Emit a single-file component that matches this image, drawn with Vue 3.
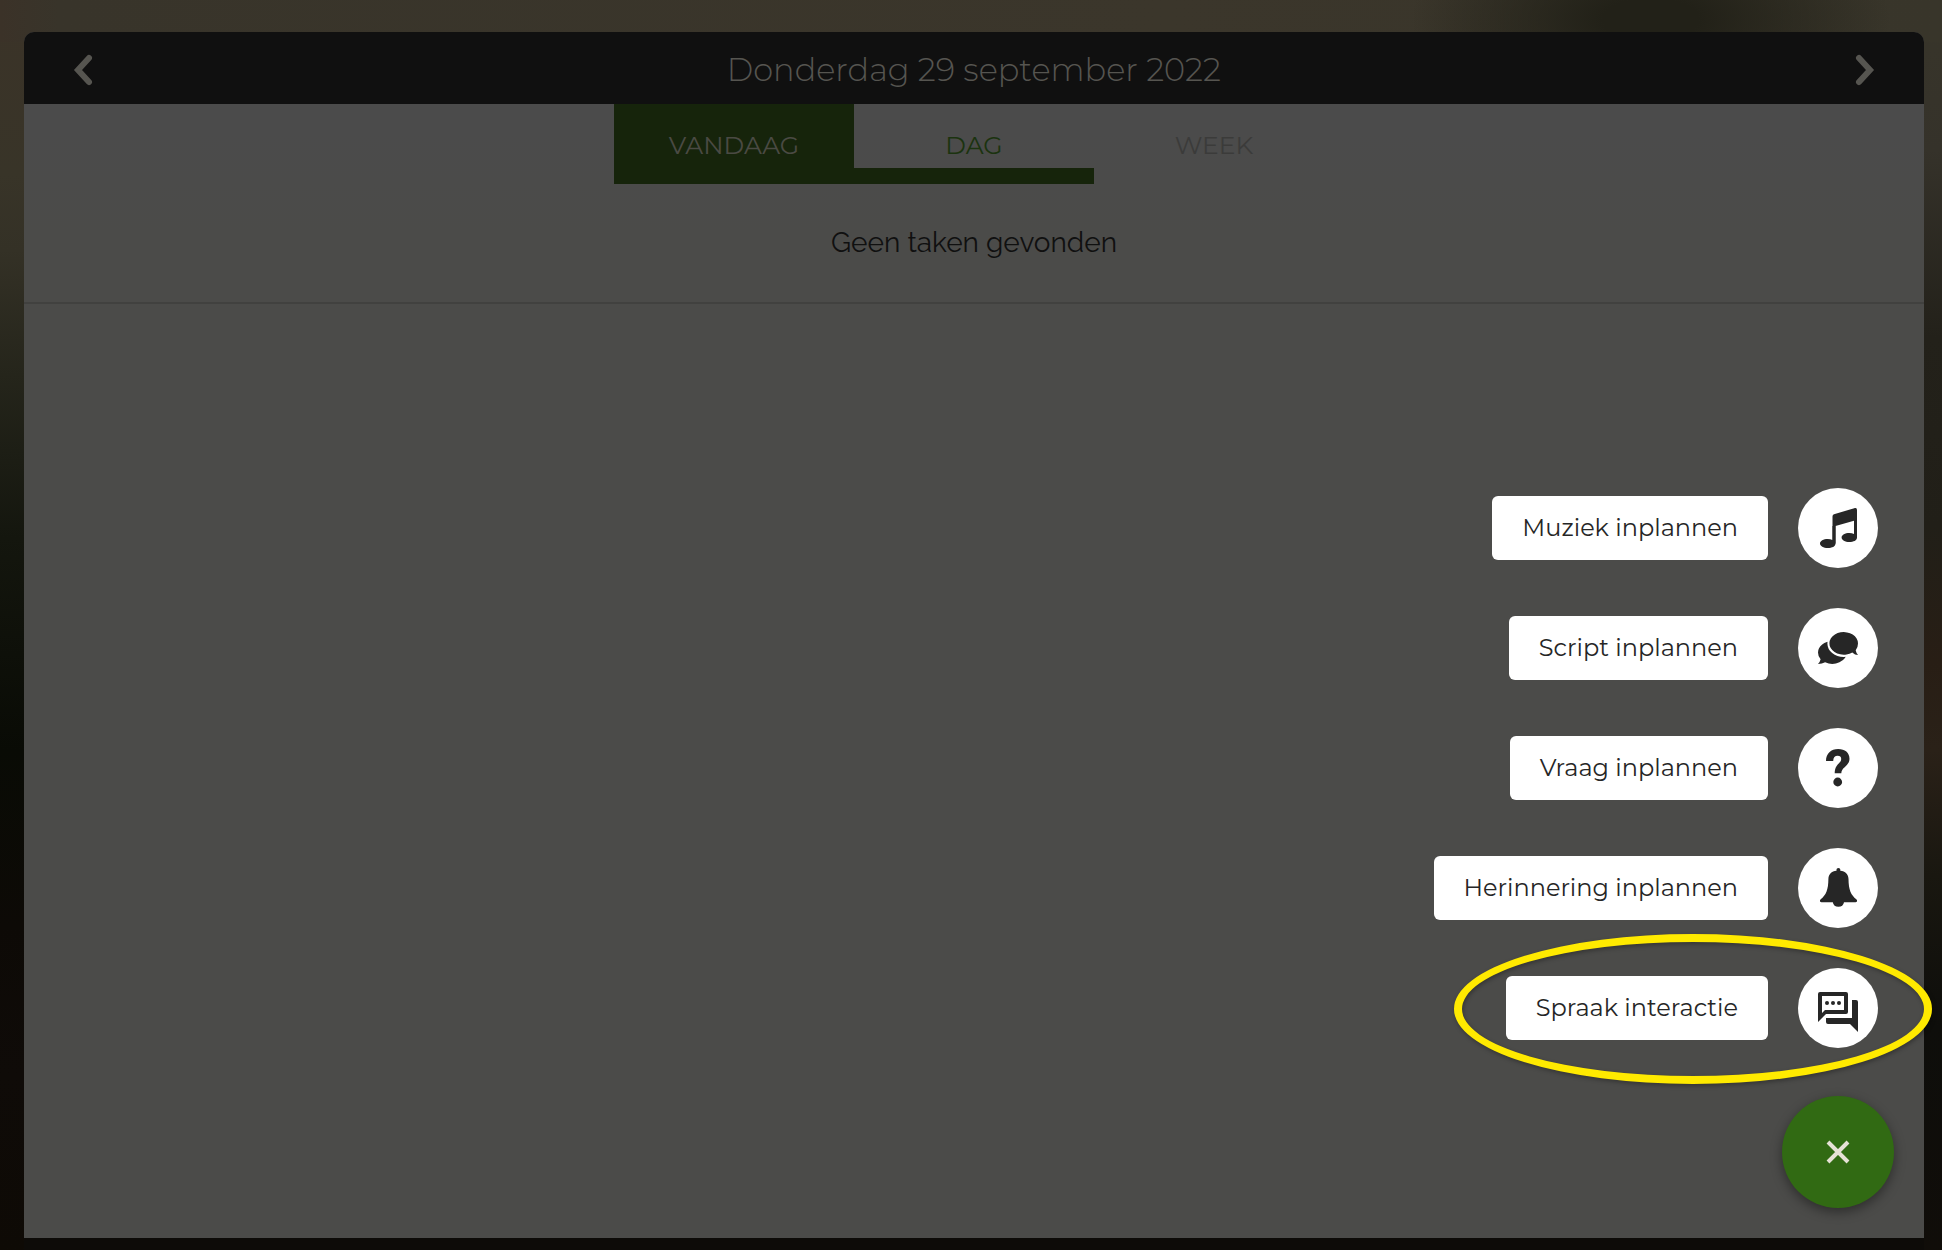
<script setup>
import { ref } from 'vue'

const view = ref('dag')
const actions = [
  { id: 'music', label: 'Muziek inplannen' },
  { id: 'script', label: 'Script inplannen' },
  { id: 'question', label: 'Vraag inplannen' },
  { id: 'reminder', label: 'Herinnering inplannen' },
  { id: 'speech', label: 'Spraak interactie', highlighted: true },
]
</script>

<template>
  <div class="page">
    <main class="card">
      <header class="bar">
        <button class="arrow" type="button" aria-label="Vorige dag">
          <svg viewBox="0 0 18 30" width="18" height="30"><path d="M15 3 4 15l11 12" /></svg>
        </button>
        <h1>Donderdag 29 september 2022</h1>
        <button class="arrow" type="button" aria-label="Volgende dag">
          <svg viewBox="0 0 18 30" width="18" height="30"><path d="m3 3 11 12L3 27" /></svg>
        </button>
      </header>

      <nav class="tabs">
        <button class="tab today" type="button">VANDAAG</button>
        <button class="tab" :class="{ active: view === 'dag' }" type="button" @click="view = 'dag'">DAG</button>
        <button class="tab" :class="{ active: view === 'week' }" type="button" @click="view = 'week'">WEEK</button>
      </nav>

      <p class="empty">Geen taken gevonden</p>

      <div class="speed-dial">
        <ul class="actions">
          <li v-for="a in actions" :key="a.id">
            <button class="action" type="button">
              <span class="label">{{ a.label }}</span>
              <span class="disc">
                <svg viewBox="0 0 40 40" width="40" height="40" aria-hidden="true">
                  <g v-if="a.id === 'music'">
                    <path d="M14.500 8.500Q14.500 6.800 16 6.300L37 .1Q39 -.3 39 2V29.500H36V12.700L17.500 18V35.500H14.500Z" />
                    <path d="M36 26V12.700h3V29.500c0 3-3.500 4.500-7.700 4.500s-7.700-2-7.700-4.600 3.500-4.500 7.700-4.500c1.800 0 3.400.4 4.700 1.100Z" />
                    <path d="M14.500 32V18h3v17.500c0 3-3.500 4.500-7.700 4.500S2 38 2 35.400s3.500-4.500 7.700-4.500c1.800 0 3.400.4 4.800 1.100Z" />
                  </g>
                  <g v-else-if="a.id === 'script'">
                    <path d="M0 24.500a14.300 11.300 0 0 1 28.600 0 14.300 11.300 0 0 1-21.500 9.800Q4 36 0 36q2-2 2.600-4.800Q0 28.500 0 24.500Z" />
                    <ellipse class="cut" cx="25.700" cy="15.400" rx="16.300" ry="13.500" />
                    <path d="M40 15.400a14.300 11.300 0 1 0-5.700 9Q37 27 40 27q-1.800-2-2.300-4.800 2.300-3 2.300-6.800Z" />
                  </g>
                  <g v-else-if="a.id === 'question'">
                    <path d="M8 13C8 5.500 13 1 20.200 1 27 1 31.500 4.700 31.500 10.700c0 7.300-8 8.300-8.200 14.600h-6.600c0-9.300 6.500-9.800 6.500-14.300 0-2-1.300-3.200-3.500-3.200-2.800 0-4.500 1.800-4.500 5.200Z" />
                    <circle cx="19.700" cy="34" r="4.400" />
                  </g>
                  <g v-else-if="a.id === 'reminder'">
                    <path d="M18.500 2.800V1.500q0-1.500 1.900-1.500t1.900 1.500v1.300c5 .5 8.100 3.600 8.200 8.200.1 11 2.500 16 7.800 20.300 1.500 1.500.7 2.900-.8 2.900h-11.500a5.700 5.700 0 0 1-11.200 0H3.500C2 34.200 1.200 32.800 2.700 31.300 8 27 10.300 22 10.400 11c.1-4.600 3.100-7.700 8.100-8.200Z" />
                  </g>
                  <g v-else>
                    <path fill-rule="evenodd" d="M2 4h26a2 2 0 0 1 2 2v18a2 2 0 0 1-2 2H8l-8 8V6a2 2 0 0 1 2-2Zm2 4v17l3-3h19V8Z" />
                    <circle cx="9" cy="15" r="2" />
                    <circle cx="15" cy="15" r="2" />
                    <circle cx="21" cy="15" r="2" />
                    <path d="M34 12h4a2 2 0 0 1 2 2v30l-8-8H10a2 2 0 0 1-2-2v-4h26Z" />
                  </g>
                </svg>
              </span>
              <span v-if="a.highlighted" class="ring"></span>
            </button>
          </li>
        </ul>
        <button class="fab" type="button" aria-label="Sluiten">
          <svg viewBox="0 0 24 24" width="24" height="24"><path d="m2 2 20 20M22 2 2 22" /></svg>
        </button>
      </div>
    </main>
  </div>
</template>

<style>
body {
  margin: 0;
  background: #0e0b07;
}
</style>

<style scoped>
.page {
  box-sizing: border-box;
  min-height: 100vh;
  display: flex;
  padding: 32px 18px 12px 24px;
  overflow: hidden;
  font-family: Montserrat, "Liberation Sans", sans-serif;
  background:
    radial-gradient(ellipse 240px 110px at 85% 20px, #222118 20%, transparent) no-repeat 0 0 / 100% 42px,
    linear-gradient(90deg, #3b3228, #38342a 3%, #3b362b 60%, #38352a) no-repeat 0 0 / 100% 42px,
    linear-gradient(#3b3328, #383428 14%, #343126 20%, #25251b 30%, #14160e 43%, #090b05 60%, #0d0a06 74%, #0f0b08 86%, #0e0a05) no-repeat 0 0 / 24px 100%,
    linear-gradient(#38352a, #35322a 12%, #23211a 27%, #211f18 42%, #281e15 53%, #2a2118 60%, #191710 70%, #0e0e0b 82%, #100d09) no-repeat 100% 0 / 18px 100%,
    #0d0b08;
}

.card {
  position: relative;
  flex: 1;
  display: flex;
  flex-direction: column;
  border-radius: 10px 10px 0 0;
  background: linear-gradient(#4b4b4b 100px, #4b4b49 200px);
}

button {
  margin: 0;
  padding: 0;
  border: 0;
  background: none;
  font: inherit;
  color: inherit;
  cursor: pointer;
}

svg {
  display: block;
  overflow: visible;
}

.bar {
  box-sizing: border-box;
  height: 72px;
  display: flex;
  align-items: center;
  justify-content: space-between;
  padding: 4px 50px 0;
  border-radius: 10px 10px 0 0;
  background: #101010;
  color: #565550;
}

.bar h1 {
  margin: 0;
  font-size: 32px;
  font-weight: 300;
  line-height: 40px;
}

.arrow path {
  fill: none;
  stroke: currentColor;
  stroke-width: 6;
  stroke-linecap: round;
}

.tabs {
  display: flex;
  justify-content: center;
}

.tab {
  box-sizing: border-box;
  width: 240px;
  height: 80px;
  padding-top: 2px;
  border: solid transparent;
  border-width: 16px 0;
  font-size: 25px;
  line-height: 32px;
  color: #3b3b3a;
}

.tab.today {
  border-color: #16240b;
  background: #16240b;
  color: #4a4a43;
}

.tab.active {
  border-bottom-color: #16240b;
  color: #1b330f;
}

.empty {
  margin: 0;
  padding: 42px 0;
  border-bottom: 2px solid #41413f;
  font-family: Raleway, "Liberation Sans", sans-serif;
  font-size: 28px;
  line-height: 34px;
  text-align: center;
  color: #101010;
}

.speed-dial {
  position: absolute;
  right: 30px;
  bottom: 30px;
  display: flex;
  flex-direction: column;
  align-items: flex-end;
  gap: 48px;
}

.actions {
  display: flex;
  flex-direction: column;
  align-items: flex-end;
  gap: 40px;
  margin: 0;
  padding: 0 16px 0 0;
  list-style: none;
}

.action {
  position: relative;
  display: flex;
  align-items: center;
  gap: 30px;
  color: #262626;
}

.label {
  padding: 16px 30px;
  border-radius: 6px;
  background: #fff;
  font-size: 24px;
  line-height: 32px;
  white-space: nowrap;
}

.disc {
  display: grid;
  place-items: center;
  width: 80px;
  height: 80px;
  border-radius: 50%;
  background: #fff;
  fill: currentColor;
}

.cut {
  fill: #fff;
}

.ring {
  position: absolute;
  inset: -34px -54px -36px -52px;
  border: 8px solid #ffea00;
  border-radius: 50%;
  filter: drop-shadow(1px 2px 2px rgb(0 0 0 / 30%));
  pointer-events: none;
}

.fab {
  display: grid;
  place-items: center;
  width: 112px;
  height: 112px;
  border-radius: 50%;
  background: #316a13;
  box-shadow: 0 4px 12px rgb(0 0 0 / 40%);
}

.fab path {
  fill: none;
  stroke: #e6e1d6;
  stroke-width: 4;
}
</style>
